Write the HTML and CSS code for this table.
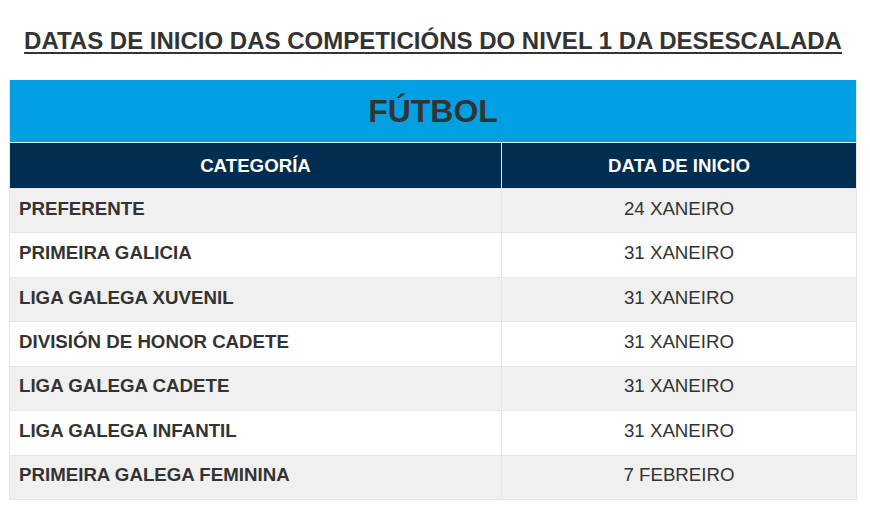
FILE: index.html
```html
<!DOCTYPE html>
<html lang="gl">
<head>
<meta charset="utf-8">
<link rel="stylesheet" href="styles.css">
</head>
<body>
<div class="page">
  <h1 class="title">DATAS DE INICIO DAS COMPETICIÓNS DO NIVEL 1 DA DESESCALADA</h1>
  <table class="schedule">
    <colgroup><col class="col-cat"><col class="col-date"></colgroup>
    <thead>
      <tr><th class="sport" colspan="2">FÚTBOL</th></tr>
      <tr class="head"><th class="c1">CATEGORÍA</th><th class="c2">DATA DE INICIO</th></tr>
    </thead>
    <tbody>
      <tr><td class="cat">PREFERENTE</td><td class="date">24 XANEIRO</td></tr>
      <tr><td class="cat">PRIMEIRA GALICIA</td><td class="date">31 XANEIRO</td></tr>
      <tr><td class="cat">LIGA GALEGA XUVENIL</td><td class="date">31 XANEIRO</td></tr>
      <tr><td class="cat">DIVISIÓN DE HONOR CADETE</td><td class="date">31 XANEIRO</td></tr>
      <tr><td class="cat">LIGA GALEGA CADETE</td><td class="date">31 XANEIRO</td></tr>
      <tr><td class="cat">LIGA GALEGA INFANTIL</td><td class="date">31 XANEIRO</td></tr>
      <tr><td class="cat">PRIMEIRA GALEGA FEMININA</td><td class="date">7 FEBREIRO</td></tr>
    </tbody>
  </table>
</div>
</body>
</html>
```
FILE: styles.css
```css
html, body {
  margin: 0;
  padding: 0;
  background: #fff;
}
body {
  font-family: "Liberation Sans", Arial, sans-serif;
  color: #333;
}
.page {
  width: 848px;
  padding: 0 13px 0 9px;
}
.title {
  margin: 0;
  padding-top: 29px;
  height: 51px;
  box-sizing: border-box;
  font-size: 24px;
  line-height: 24px;
  font-weight: bold;
  text-align: center;
  text-decoration: underline;
  text-underline-offset: 3px;
  color: #333;
}
.schedule {
  margin-top: 29px;
  width: 847px;
  border-collapse: collapse;
  table-layout: fixed;
  border: 1px solid #e4e7ee;
  border-top: 0;
}
.col-cat {
  width: 492px;
}
.col-date {
  width: 355px;
}
.sport {
  background: #02a0e3;
  color: #333;
  font-size: 32px;
  font-weight: bold;
  height: 62px;
  padding: 0;
  text-align: center;
  border: 1px solid #e4e7ee;
  border-top: 0;
  border-bottom-color: #e6eef5;
}
.head th {
  background: #012d50;
  color: #fff;
  font-size: 18.7px;
  font-weight: bold;
  height: 45px;
  padding: 0;
  text-align: center;
  border: 1px solid #e4e7ee;
}
.schedule td {
  height: 44.45px;
  padding: 0 9px 4px;
  font-size: 18.7px;
  border: 1px solid #e4e7ee;
  box-sizing: border-box;
}
.schedule tbody tr:nth-child(odd) td {
  background: #f0f0f0;
}
.cat {
  font-weight: bold;
  text-align: left;
}
.date {
  text-align: center;
}
```
